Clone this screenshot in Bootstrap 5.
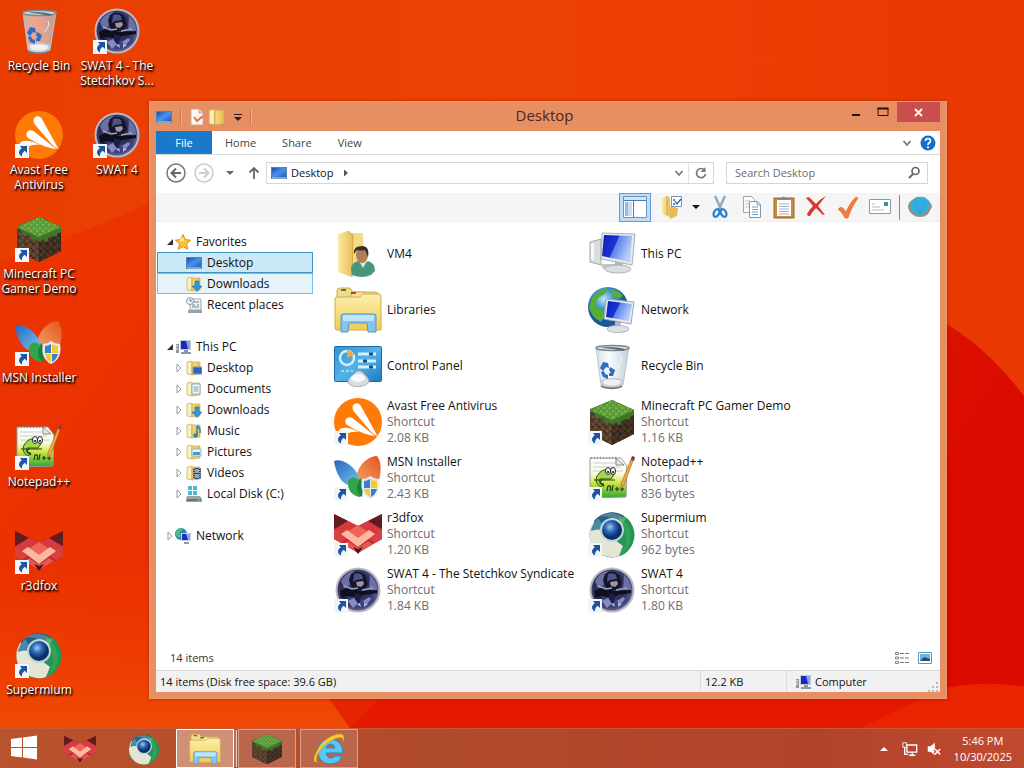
<!DOCTYPE html>
<html lang="en">
<head>
<meta charset="utf-8">
<meta name="viewport" content="width=device-width, initial-scale=1">
<title>Desktop</title>
<link href="https://cdn.jsdelivr.net/npm/bootstrap@5.3.0/dist/css/bootstrap.min.css" rel="stylesheet">
<style>
  body { font-family: "Open Sans", "Noto Sans", sans-serif; font-size: 12px; line-height: 16px; color: #111; background: #e93a02; }
  a { color: inherit; text-decoration: none; }
  svg { display: block; flex: none; }
  .i16 { width: 16px; height: 16px; }
  .i18 { width: 18px; height: 18px; }
  .i24 { width: 24px; height: 24px; }
  .i32 { width: 32px; height: 32px; }
  .i48 { width: 48px; height: 48px; }
  .flat { padding: 0; border: 0; border-radius: 0; background: none; font-size: 12px; line-height: 16px; color: inherit; display: flex; align-items: center; justify-content: center; flex: none; }
  .compact { font-size: 11px; }

  .shortcuts { display: grid; grid-auto-flow: column; grid-template-rows: repeat(7, 104px); grid-auto-columns: 78px; width: max-content; }
  .shortcut { display: flex; flex-direction: column; align-items: center; padding-top: 7px; color: #fff; text-align: center; text-shadow: 1px 1px 2px #000, 1px 2px 2px #000; line-height: 15px; }
  .shortcut svg { margin-bottom: 3px; }

  .explorer { left: 149px; right: 77px; top: 101px; bottom: 29px; background: #e88e63; border: 1px solid #ee9b74; padding: 0 6px 6px; box-shadow: 0 0 3px rgba(90,20,0,.45); }
  .titlebar { height: 29px; color: #4a2a1e; }
  .titlebar h1 { font-size: 15px; line-height: 20px; font-weight: 400; padding: 0 6px 4px 0; }
  .cut { width: 1px; height: 16px; background: #c97a55; border-right: 1px solid #f3ac8a; box-sizing: content-box; }
  .close { width: 43px; height: 20px; background: #c7504f; }
  .tabs { height: 24px; border-bottom: 1px solid #dadbdc; color: #444; background: #fff; }
  .tabs a { padding: 0 13px; line-height: 25px; }
  .tabs .file { width: 56px; padding: 0; text-align: center; background: #1979ca; color: #fff; align-self: stretch; line-height: 23px; }
  .addressrow { height: 38px; padding: 0 12px 2px 10px; background: #fff; }
  .field { height: 22px; border: 1px solid #d5d5d5; background: #fff; }
  .search { width: 202px; margin-left: 12px; }
  .search input { border: 0; outline: 0; min-width: 0; height: 20px; line-height: 20px; font-size: 11px; padding: 0 8px; color: #666; background: none; }
  .search input::placeholder { color: #6d6d6d; opacity: 1; }
  .tools { height: 29px; background: #f5f5f5; border-bottom: 1px solid #e8edf2; padding-right: 4px; }
  .tools .flat { width: 32px; height: 29px; }
  .tools .arrow { width: 16px; }
  .tools .on { background: #bfdcf8; border: 1px solid #5c9ad8; margin-right: 5px; }
  .rule { width: 1px; height: 25px; background: #888; margin: 0 4px 0 3px; }
  .tree { width: 165px; padding: 9px 0 0 1px; }
  .tree a { display: flex; align-items: center; width: 156px; height: 21px; padding-left: 7px; border: 1px solid transparent; }
  .tree a.sub { padding-left: 16px; }
  .tree span { margin-left: 5px; }
  .tree .gap { margin-top: 21px; }
  .tree .twist { width: 10px; height: 10px; }
  .tree .sub .i16 { margin-left: 2px; }
  .tree a.picked { background: #cbe8f6; border-color: #3c94c4; }
  .tree a.hot { background: #e5f3fb; border-color: #70c0e7; }
  .files { display: grid; grid-template-columns: repeat(auto-fill, 254px); grid-auto-rows: 56px; padding: 4px 0 0 13px; align-content: start; }
  .files a { display: flex; align-items: center; gap: 5px; white-space: nowrap; }
  .files small { display: block; font-size: 12px; color: #6d6d6d; }
  .summary { height: 25px; padding: 0 8px 0 14px; color: #333; background: #fff; }
  .statusbar { height: 22px; background: #f1f1f1; border-top: 1px solid #d7d7d7; }
  .statusbar > div { border-left: 1px solid #dcdcdc; height: 21px; }
  .total { width: 86px; }
  .place { width: 154px; }

  .taskbar { height: 40px; background: linear-gradient(90deg, #b9532d, #b04a2c 45%, #b2432b 80%, #bf4a30); border-top: 1px solid #c55a35; color: #fff; }
  .task { width: 58px; height: 39px; border: 1px solid #d9a08c; background: #b9664c; margin-right: 4px; }
  .task.current { border: 1px solid #fff; background: #cf9078; box-shadow: 3px 0 0 -1px #b96b52, 4px 0 0 -1px #f1d3c8; }
</style>
</head>
<body>
<svg width="0" height="0" class="position-absolute" aria-hidden="true">
  <defs>
    <linearGradient id="gFolder" x1="0" x2="1"><stop offset="0" stop-color="#fbe9a4"/><stop offset="1" stop-color="#e6bf55"/></linearGradient>
    <linearGradient id="gFolderV" x1="0" y1="0" x2="0" y2="1"><stop offset="0" stop-color="#fbeeb0"/><stop offset="1" stop-color="#f0cd52"/></linearGradient>
    <linearGradient id="gScreen" x1="0" x2="1" y2=".4"><stop offset="0" stop-color="#0a1fae"/><stop offset=".5" stop-color="#1c35d6"/><stop offset=".52" stop-color="#5d80ee"/><stop offset="1" stop-color="#b6cdfa"/></linearGradient>
    <linearGradient id="gPanel" x1="0" y1="0" x2="1" y2="1"><stop offset="0" stop-color="#2f93d6"/><stop offset=".5" stop-color="#55b2e8"/><stop offset="1" stop-color="#1d78c0"/></linearGradient>
    <linearGradient id="gBlue" x1="0" y1="0" x2="1" y2="1"><stop offset="0" stop-color="#1a4fb0"/><stop offset=".5" stop-color="#4b92ec"/><stop offset="1" stop-color="#2259b8"/></linearGradient>
    <radialGradient id="gGlobe" cx=".4" cy=".3"><stop offset="0" stop-color="#bfe5fa"/><stop offset=".5" stop-color="#3f93cf"/><stop offset="1" stop-color="#155a99"/></radialGradient>
    <radialGradient id="gOrb" cx=".4" cy=".35"><stop offset="0" stop-color="#9ecbf5"/><stop offset=".5" stop-color="#2e69b8"/><stop offset="1" stop-color="#0b2e6c"/></radialGradient>
    <linearGradient id="gBin" x1="0" x2="1"><stop offset="0" stop-color="#c6d3dc" stop-opacity=".75"/><stop offset=".4" stop-color="#f2f8fd" stop-opacity=".55"/><stop offset="1" stop-color="#a9bbc8" stop-opacity=".75"/></linearGradient>
    <linearGradient id="gWingB" x1="0" y1="0" x2="1" y2="1"><stop offset="0" stop-color="#2567c0"/><stop offset="1" stop-color="#7cc4ee"/></linearGradient>
    <linearGradient id="gWingO" x1="1" y1="0" x2="0" y2="1"><stop offset="0" stop-color="#e2541c"/><stop offset="1" stop-color="#f5a56a"/></linearGradient>
    <linearGradient id="gNote" x1="0" y1="0" x2="0" y2="1"><stop offset="0" stop-color="#fff"/><stop offset=".4" stop-color="#f7fae0"/><stop offset=".6" stop-color="#d7e74a"/><stop offset="1" stop-color="#2ba62e"/></linearGradient>
    <radialGradient id="gSwat" cx=".45" cy=".45" r=".6"><stop offset="0" stop-color="#43467c"/><stop offset=".6" stop-color="#2c2c58"/><stop offset="1" stop-color="#6d739c"/></radialGradient>
    <pattern id="pGrass" width="6" height="6" patternUnits="userSpaceOnUse"><rect width="6" height="6" fill="#5fa03c"/><path d="M0 0h2v2h-2zM3 3h2v2h-2z" fill="#74b54a"/><path d="M4 0h2v1h-2zM1 4h1v2h-1z" fill="#4e8a31"/></pattern>
    <pattern id="pDirt" width="7" height="7" patternUnits="userSpaceOnUse"><rect width="7" height="7" fill="#563f2c"/><path d="M0 1h2v2h-2zM4 4h2v2h-2z" fill="#6f5138"/><path d="M3 0h2v2h-2zM1 5h2v1h-2z" fill="#3b2a1c"/></pattern>

    <symbol id="arrow" viewBox="0 0 14 14"><path d="M0 0h14v14H0z" fill="#f3f5f8"/><path d="M5 2h7v7L9.700 6.700C7.500 8.200 6.800 9.700 7 12.500 3.500 10.500 2.700 7 6.800 4.200z" fill="#1d559e"/></symbol>

    <symbol id="bin" viewBox="0 0 48 48">
      <path d="M8 5l5 38c5 3 16 3 22 0l6-38z" fill="url(#gBin)" stroke="#b9c6cf"/>
      <path d="M13 38l1 6c5 3 15 3 20 0l1-6c-6-3-16-3-22 0z" fill="#c7cdd2"/><path d="M15 39c5-2 13-2 18 0l-1 3c-5 2-11 2-16 0z" fill="#eff2f3"/>
      <path d="M13 44c5 3 17 3 21 0" stroke="#777d82" stroke-width="2" fill="none"/>
      <ellipse cx="24.500" cy="6" rx="16.500" ry="2.500" fill="#dce6ec" stroke="#7d8990" stroke-width="1.500"/><path d="M12 6c8-2 17-1 25 1l-2 2c-8-2-16-3-23-3z" fill="#596f79"/>
      <path d="M15 20l5 1 1 5-3-1-3 4-3-3zM22 25l5 3-2 6h-4v-3h2l-2-3zM13 30l3-1 1 3 3 1v4l-5-2z" fill="#2e6dc2"/><path d="M33 14l1 4-4 7" stroke="#fff" fill="none" opacity=".7"/>
    </symbol>
    <symbol id="swat" viewBox="0 0 48 48">
      <circle cx="24" cy="24" r="21.500" fill="url(#gSwat)" stroke="#bcb8c4" stroke-width="2"/>
      <path d="M7 15c4-7 9-10 14-10-4 4-6 9-5 14l-6 3zM36 9c5 4 8 11 7 18l-8-4z" fill="#6a71a3"/>
      <path d="M17 8q7-5 14 1l3 9-3 5-8 2-6-5-2-6z" fill="#14142a"/><path d="M20 8q5-2 8 1l1 4-7 1-3 2z" fill="#4d5389"/><path d="M22 16l7-1 1 3-3 3-4-1z" fill="#a4929f"/>
      <path d="M6 25l9-4 10 4 18-1v3l-13 2-5 3-11-2-7 2z" fill="#100f20"/><path d="M10 20l8 3 6-1M28 24l11-2" stroke="#a5a5c2" stroke-width="1.500" fill="none"/>
      <path d="M11 33l10-2 9 3 8-4 3 3c-5 8-14 11-23 8z" fill="#3e4284"/><path d="M14 35l6-3 4 5-5 5zM29 35l6-4 2 2-5 6z" fill="#868bc0"/><path d="M21 27l7 2-3 10-4-6zM8 31l6 1-2 5z" fill="#1c1f47"/><path d="M30 37l4 1-4 3zM23 38l3-1 1 4z" fill="#b6b9d6"/>
    </symbol>
    <symbol id="avast" viewBox="0 0 48 48"><circle cx="24" cy="24" r="24" fill="#ff7b05"/><path d="M18.500 9c1-5 7-5 9 0l16 29c-3-1-5-3-7-5L19.500 13q-1-2-1-4z" fill="#fff"/><path d="M12 21c3-3 6-2 9 1l20 16C32 37 21 32 13 27c-2-2-2-4-1-6zM5 32c4-4 12-2 20 2-7-1-12 1-16 4-3-1-4-3-4-6z" fill="#fff"/></symbol>
    <symbol id="mc" viewBox="0 0 48 48">
      <path d="M2 12l22-10 22 10v24L24 47 2 36z" fill="#4b3828"/><path d="M2 12l22 10v25L2 36z" fill="url(#pDirt)"/><path d="M46 12L24 22v25l22-11z" fill="url(#pDirt)"/><path d="M46 12L24 22v25l22-11z" fill="#000" opacity=".25"/>
      <path d="M24 2l22 10v5l-4 2v2l-4 1v-1l-5 2v3l-4 1v-3l-5 3-4-3v2l-4-2v-3l-5-2v3l-4-3v-3l-5-2v-3z" fill="#3f7429"/><path d="M24 2l22 10-22 10L2 12z" fill="url(#pGrass)"/>
    </symbol>
    <symbol id="msn" viewBox="0 0 48 48">
      <path d="M22 27C22 12 34 2 43 2c5 6 4 17 2 24l-19 4z" fill="url(#gWingO)"/><path d="M0 7c9-4 26 9 26 22-5 3-12 4-17-1C4 23 1 14 0 7z" fill="url(#gWingB)"/>
      <path d="M14 27c4-6 12-5 15 8l-3 8c-7-1-13-6-12-16z" fill="#31a548"/><path d="M26 24c3 3 3 12 2 19-3-1-5-6-5-11z" fill="#168442"/>
      <path d="M28 25c3 0 6-1 8-3 3 2 6 3 9 3 2 10-2 17-9 20-7-4-10-10-8-20z" fill="#e6eaf0"/><path d="M30 27c2 0 4-1 6-2v9h-6z" fill="#3a7dd0"/><path d="M37 25q3 2 6 2v7h-6z" fill="#f4cb28"/><path d="M30 35h6v8q-5-3-6-8z" fill="#f4cb28"/><path d="M37 35h6q-1 5-6 8z" fill="#3a7dd0"/>
    </symbol>
    <symbol id="npp" viewBox="0 0 48 48">
      <path d="M2 4h31l6 8-1 31-36 1z" fill="url(#gNote)" stroke="#999"/><path d="M5 9h25M5 13h27M5 17h30" stroke="#c8ccd6"/><path d="M3 4h27" stroke="#555" stroke-dasharray="1 2"/><path d="M28 4v7h8z" fill="#e9e9e9" stroke="#888"/>
      <path d="M9 22q5-8 12-6 5-3 6 3l-4 6H12q-3 4 4 5l-3 3q-7-4-4-11z" fill="#a4d84a" stroke="#31561c"/><ellipse cx="20" cy="17" rx="2.500" ry="3.500" fill="#fff" stroke="#222"/><ellipse cx="25" cy="17" rx="2.500" ry="3.500" fill="#fff" stroke="#222"/><circle cx="20" cy="18" r="1"/><circle cx="25" cy="18" r="1"/>
      <path d="M6 26h21M14 25l-2 4 4 3M19 37l1-5q4-1 2 5M25 31l-1 6M27 35h4M29 33v4M32 35h4M34 33v4" stroke="#173f10" stroke-width="1.200" fill="none"/>
      <path d="M44 3l2 1-10 27-3 4v-5z" fill="#eeaa45" stroke="#a56d24" stroke-width=".7"/><path d="M44 2l3 1-1 4-3-1z" fill="#7f3a4e"/>
    </symbol>
    <symbol id="fox" viewBox="0 0 48 48">
      <path d="M0 4l24 12L48 4v25L24 43 0 29z" fill="#bd262c"/><path d="M0 4l14 7-14 8zM48 4l-14 7 14 8z" fill="#611b21"/><path d="M14 11l10 5 10-5 14 9-24 15L0 20z" fill="#d53a3c"/><path d="M0 29V19l14 9-7 5zM48 29V19l-14 9 7 5z" fill="#d94042"/><path d="M24 15l12 8-12 8-12-8z" fill="#ef655b"/><path d="M7 24l6-4 11 8 11-8 6 4-17 13z" fill="#fbb9a2"/><path d="M14 31l10 7 10-7 5 3-15 9-15-9z" fill="#e65952"/><path d="M19 37l5 2 5-2-5 7z" fill="#4c1217"/>
    </symbol>
    <symbol id="sup" viewBox="0 0 48 48">
      <circle cx="24" cy="25" r="22.500" fill="#24945a"/><path d="M6 11A22.500 22.500 0 0 1 36 6l-10 8q-9 4-11 12z" fill="#246283"/><path d="M6 11A22.500 22.500 0 0 0 31 46l4-10L6 14z" fill="#e4e5d5"/><path d="M3 21Q4 14 10 8l8 13Q10 18 3 21z" fill="#4889a7"/><path d="M31 46q9-9 6-25l-7-15a22.500 22.500 0 0 1 1 40z" fill="#31a451"/><circle cx="24" cy="20" r="12" fill="#bed5d7"/><circle cx="24" cy="20" r="10" fill="url(#gOrb)"/><path d="M9 7q16-9 29 2l-5 6Q22 4 9 7z" fill="#fff" opacity=".2"/>
    </symbol>
    <symbol id="user" viewBox="0 0 48 48">
      <path d="M13 3h16l1 34-12 4z" fill="#f3dc85"/><path d="M4 4l10-3 5 4-1 42-14-5z" fill="url(#gFolder)"/><path d="M14 1l5 4-1 42" stroke="#d3a840" fill="none"/>
      <path d="M17 39q1-8 9-8l4 3 4-3q7 2 7 10l-4 4q-9 4-19 0z" fill="#4a967b"/><path d="M25 31h8l-4 7z" fill="#dfeae8"/><ellipse cx="28" cy="25" rx="6" ry="8" fill="#b37e57"/><path d="M20 24q-1-8 8-8 8 0 6 11l-3-7q-5 1-8 0z" fill="#3b3029"/>
    </symbol>
    <symbol id="lib" viewBox="0 0 48 48">
      <path d="M3 5q0-3 3-3h10l3 4h22q4 0 4 4v10H3z" fill="#eedb8e" stroke="#cfae51"/><path d="M17 6h13l3 4h12v10H17z" fill="#f4e39d" stroke="#cfae51"/><path d="M7 4h5M17 7h5M30 10h5" stroke="#437d49" stroke-width="2"/><path d="M18 7h4" stroke="#ba472e" stroke-width="2"/>
      <path d="M1 13q0-2 2-2h23l3-3h16q2 0 2 3v33H3q-2 0-2-2z" fill="url(#gFolderV)" stroke="#d1ac46"/><path d="M7 30q0-2 2-2h31q2 0 2 2v16h-8l-1-9H15l-1 9H7z" fill="#83c4ec" stroke="#5199c9"/><path d="M9 29h31v6H9z" fill="#c1e4f7"/>
    </symbol>
    <symbol id="cpl" viewBox="0 0 48 48"><rect x=".5" y="4.500" width="47" height="35" rx="1" fill="url(#gPanel)" stroke="#1d6ba8"/><circle cx="13" cy="16" r="7" fill="none" stroke="#d2effd" stroke-width="2.500"/><path d="M13 16V8a8 8 0 0 1 7 5z" fill="#f3a63c"/><path d="M24 12h18M24 19h18M24 25h18" stroke="#d6f0ff" stroke-width="3"/><path d="M35 12h4M29 19h4M35 25h4" stroke="#115087" stroke-width="3"/><path d="M7 29h12" stroke="#98e0e7" stroke-width="2" stroke-dasharray="3 2"/><path d="M14 41c0-5 3-6 6-9 3-4 7-4 10 0 3 3 5 5 5 8-5 6-16 6-21 1z" fill="#d7dde1" stroke="#a7afb5"/><ellipse cx="24" cy="36" rx="7" ry="4" fill="#f7f9fa"/></symbol>
    <symbol id="pc" viewBox="0 0 48 48"><path d="M2 12l11-3v26l-11-3z" fill="#d9dde0" stroke="#a5a9ae"/><path d="M3 14l3-1v17l-3-1z" fill="#f9f9f9"/><path d="M12 34h15l3 3-15 2z" fill="#c2c7cb"/><path d="M14 3l33 1-3 31-31-6z" fill="#e5e9ed" stroke="#a8afb5"/><path d="M16 5l28 1-2 26-28-6z" fill="url(#gScreen)"/><path d="M27 31l8 2v4h-8z" fill="#b1b6bb"/><ellipse cx="30" cy="39" rx="13" ry="4" fill="#dbdfe2" stroke="#b0b5ba"/></symbol>
    <symbol id="net" viewBox="0 0 48 48"><circle cx="20" cy="21" r="20" fill="url(#gGlobe)"/><path d="M4 12q7-9 15-10l-1 5-8 5-3 8 7 3 3 7-4 6q-10-5-12-15zM23 3q8 1 12 7l-5 3-6-4z" fill="#58ad3a"/><path d="M18 13L46 16l-3 22-27-5z" fill="#e6eaee" stroke="#9fa7b0"/><path d="M20 15l24 3-3 17-23-4z" fill="url(#gScreen)"/><path d="M27 36h6v6h-6z" fill="#b2b8bd"/><ellipse cx="30" cy="43" rx="11" ry="3.500" fill="#dbe0e3" stroke="#b0b6bb"/></symbol>

    <symbol id="fd" viewBox="0 0 16 16"><path d="M1 2l4-1 2 1h7v12l-8 1-5-1z" fill="url(#gFolder)" stroke="#d4af55" stroke-width=".7"/><path d="M6 2v13" stroke="#cfa846"/><path d="M2 3l3-1v12l-3-1z" fill="#fcf0bd"/></symbol>
    <symbol id="screen" viewBox="0 0 16 16"><path d="M0 2h16v12H0z" fill="#5b7eb0"/><path d="M1 3h14v9H1z" fill="url(#gBlue)"/><path d="M1 13h14" stroke="#b9c8d2"/></symbol>
    <symbol id="star" viewBox="0 0 16 16"><path d="M8 .5l2.200 5 5.300.7-4 3.600 1.200 5.400L8 12.600l-4.700 2.600 1.200-5.400-4-3.600 5.300-.7z" fill="#fbc634" stroke="#dc8d19"/><path d="M8 3l1 4H4z" fill="#fff0a4"/></symbol>
    <symbol id="down" viewBox="0 0 16 16"><path d="M9 5h4v5h3l-5 5.500L6 10h3z" fill="#3196d6" stroke="#1d6ba3" stroke-width=".6"/></symbol>
    <symbol id="recent" viewBox="0 0 16 16"><path d="M4 2h11v11H4z" fill="#eef2f5" stroke="#9aaab5"/><path d="M6 5h7M6 8h3M11 8h2M6 10h7" stroke="#73838e"/><path d="M2 13h14v3H2z" fill="#93a4ad"/><circle cx="4" cy="4" r="3.500" fill="#f1f5f8" stroke="#8998a2"/><path d="M4 2v2h2" stroke="#587284" fill="none"/></symbol>
    <symbol id="disk" viewBox="0 0 16 16"><path d="M2 0h4v4H2zM7 0h4v4H7zM2 5h4v4H2zM7 5h4v4H7z" fill="#45b9dd"/><path d="M1 10h13l2 3v3H0v-3z" fill="#9aa4a8"/><path d="M1 13h14v2H1z" fill="#68747a"/><path d="M11 14h3" stroke="#7bdb5c"/></symbol>
    <symbol id="pcs" viewBox="0 0 16 16"><path d="M1 5h3v9H1z" fill="#8b98a2"/><path d="M1 7h2M1 10h2" stroke="#fff"/><path d="M5 1h11v10H5z" fill="#c1ccd6"/><path d="M6 2h9v8H6z" fill="#1b27bd"/><path d="M11 2h4v8h-2z" fill="#879eea"/><path d="M9 11h4v2h3v2H6v-2h3z" fill="#8b98a2"/></symbol>
    <symbol id="nets" viewBox="0 0 16 16"><circle cx="6" cy="6" r="6" fill="#2683bd"/><path d="M1 3q4-4 7-2L5 5l1 3-2 2Q0 8 1 3z" fill="#56b878"/><path d="M6 5h10v8H6z" fill="#c8d3de"/><path d="M7 6h8v6H7z" fill="#1c2dc1"/><path d="M11 6h4v6h-2z" fill="#90a9ee"/><path d="M9 14h5v2H9z" fill="#8d9da8"/></symbol>
    <symbol id="open" viewBox="0 0 10 10"><path d="M8 2v6H2z" fill="#333"/></symbol>
    <symbol id="shut" viewBox="0 0 10 10"><path d="M3 1l4 4-4 4z" fill="#fff" stroke="#999"/></symbol>
    <symbol id="chev" viewBox="0 0 10 10"><path d="M1.500 3l3.500 4 3.500-4" stroke="#777" stroke-width="1.800" fill="none"/></symbol>
    <symbol id="tri" viewBox="0 0 10 10"><path d="M1 3h8L5 7z" fill="currentColor"/></symbol>
    <symbol id="ie" viewBox="0 0 32 32"><path d="M30 20H13q1 5 5 5 3 0 4-2h7q-3 8-12 8Q5 30 5 18 6 6 17 6q13 1 13 14zM13 15h9q-1-4-4-4-4 0-5 4z" fill="#5bc6f1" stroke="#2787c6"/><path d="M5 29q-7 1-2-9Q8 8 19 3q12-5 12 2l-1 4q1-6-6-4Q12 9 6 19q-5 9-1 10z" fill="#f9cb2b" stroke="#d99b16" stroke-width=".6"/></symbol>
  </defs>
</svg>

<div class="d-flex flex-column vh-100 overflow-hidden">
  <main class="position-relative flex-grow-1 overflow-hidden">
    <svg class="position-absolute top-0 start-0 w-100 h-100" viewBox="0 0 1024 728" preserveAspectRatio="none" aria-hidden="true">
      <defs>
        <linearGradient id="wTop" x1="0" x2="1"><stop offset="0" stop-color="#e93e02"/><stop offset=".5" stop-color="#ee4104"/><stop offset="1" stop-color="#e93802"/></linearGradient>
        <linearGradient id="wLow" x1="0" x2="1" y2=".4"><stop offset="0" stop-color="#ec3402"/><stop offset=".45" stop-color="#ea3000"/><stop offset="1" stop-color="#da0c00"/></linearGradient>
        <linearGradient id="wBase" x1="0" x2="0" y1="0" y2="1"><stop offset="0" stop-color="#f03c00" stop-opacity="0"/><stop offset="1" stop-color="#ef4b05"/></linearGradient>
      </defs>
      <path d="M0 0h1024v728H0z" fill="url(#wTop)"/>
      <path d="M0 262Q80 235 150 203L500 120l440 200q46 26 84 76v332H0z" fill="url(#wLow)"/>
      <path d="M0 560h150l180 140 20 28H0z" fill="url(#wBase)"/>
      <path d="M350 728l30-30h644v30z" fill="#e51800"/>
      <path d="M940 690q30-10 84-4v42H860z" fill="#e92400"/>
      <path d="M158 61.500h702" stroke="#93604a"/>
    </svg>

    <nav class="shortcuts position-relative" aria-label="Desktop icons">
      <a href="#" class="shortcut"><svg class="i48"><use href="#bin"/></svg>Recycle Bin</a>
      <a href="#" class="shortcut"><svg class="i48" viewBox="0 0 48 48"><use href="#avast"/><use href="#arrow" x="0" y="33" width="14" height="14"/></svg>Avast Free<br>Antivirus</a>
      <a href="#" class="shortcut"><svg class="i48" viewBox="0 0 48 48"><use href="#mc"/><use href="#arrow" x="0" y="33" width="14" height="14"/></svg>Minecraft PC<br>Gamer Demo</a>
      <a href="#" class="shortcut"><svg class="i48" viewBox="0 0 48 48"><use href="#msn"/><use href="#arrow" x="0" y="33" width="14" height="14"/></svg>MSN Installer</a>
      <a href="#" class="shortcut"><svg class="i48" viewBox="0 0 48 48"><use href="#npp"/><use href="#arrow" x="0" y="33" width="14" height="14"/></svg>Notepad++</a>
      <a href="#" class="shortcut"><svg class="i48" viewBox="0 0 48 48"><use href="#fox"/><use href="#arrow" x="0" y="33" width="14" height="14"/></svg>r3dfox</a>
      <a href="#" class="shortcut"><svg class="i48" viewBox="0 0 48 48"><use href="#sup"/><use href="#arrow" x="0" y="33" width="14" height="14"/></svg>Supermium</a>
      <a href="#" class="shortcut text-nowrap"><svg class="i48" viewBox="0 0 48 48"><use href="#swat"/><use href="#arrow" x="0" y="33" width="14" height="14"/></svg>SWAT 4 - The<br>Stetchkov S...</a>
      <a href="#" class="shortcut"><svg class="i48" viewBox="0 0 48 48"><use href="#swat"/><use href="#arrow" x="0" y="33" width="14" height="14"/></svg>SWAT 4</a>
    </nav>

    <section class="explorer position-absolute d-flex flex-column" aria-label="Desktop folder">
      <header class="titlebar d-flex align-items-center flex-shrink-0">
        <svg class="i16"><use href="#screen"/></svg>
        <span class="cut ms-2"></span>
        <button class="flat ms-2" aria-label="Properties"><svg width="14" height="16" viewBox="0 0 14 16"><path d="M1 0h8l4 4v12H1z" fill="#fdf8f4" stroke="#c3a99a"/><path d="M9 0v4h4" fill="#e9d6ca" stroke="#c3a99a"/><path d="M4 8l3 4 6-5" stroke="#e0764b" stroke-width="2" fill="none"/></svg></button>
        <button class="flat ms-1" aria-label="New folder"><svg class="i18"><use href="#fd"/></svg></button>
        <button class="flat ms-2" aria-label="Customize toolbar"><svg width="8" height="12" viewBox="0 0 8 12"><path d="M0 3.500h8" stroke="#222"/><path d="M0 6h8l-4 4z" fill="#222"/></svg></button>
        <span class="cut ms-2"></span>
        <h1 class="m-0 flex-grow-1 text-center">Desktop</h1>
        <div class="d-flex align-self-start">
          <button class="flat px-2" aria-label="Minimize"><svg width="10" height="20" viewBox="0 0 10 20"><path d="M1 13h8" stroke="#2b1208" stroke-width="2"/></svg></button>
          <button class="flat px-2" aria-label="Maximize"><svg width="12" height="20" viewBox="0 0 12 20"><path d="M1 6.500h10v7H1z" fill="none" stroke="#2b1208"/><path d="M.5 6.500h11" stroke="#2b1208" stroke-width="2"/></svg></button>
          <button class="flat close" aria-label="Close"><svg width="9" height="9" viewBox="0 0 9 9"><path d="M1 1l7 7M8 1L1 8" stroke="#fff" stroke-width="1.800"/></svg></button>
        </div>
      </header>

      <nav class="tabs compact d-flex align-items-center flex-shrink-0" aria-label="Ribbon">
        <a href="#" class="file">File</a><a href="#">Home</a><a href="#">Share</a><a href="#">View</a>
        <button class="flat ms-auto" aria-label="Expand the ribbon"><svg width="10" height="10"><use href="#chev"/></svg></button>
        <button class="flat ms-2 me-1" aria-label="Help"><svg class="i16" viewBox="0 0 16 16"><circle cx="8" cy="8" r="7.500" fill="#1272c8"/><path d="M5.500 6q0-2.500 2.500-2.500T10.500 6Q10.500 7 9 8 8 8.500 8 10" stroke="#fff" stroke-width="1.700" fill="none"/><circle cx="8" cy="12.300" r="1.100" fill="#fff"/></svg></button>
      </nav>

      <div class="addressrow d-flex align-items-center flex-shrink-0">
        <button class="flat" aria-label="Back"><svg width="20" height="20" viewBox="0 0 20 20"><circle cx="10" cy="10" r="9" fill="none" stroke="#777" stroke-width="1.500"/><path d="M15 10H6M10 5.500L5.500 10l4.500 4.500" stroke="#666" stroke-width="2" fill="none"/></svg></button>
        <button class="flat ms-2" aria-label="Forward"><svg width="20" height="20" viewBox="0 0 20 20"><circle cx="10" cy="10" r="9" fill="none" stroke="#ccc" stroke-width="1.500"/><path d="M5 10h9M10 5.500l4.500 4.500-4.500 4.500" stroke="#ccc" stroke-width="2" fill="none"/></svg></button>
        <button class="flat ms-2 me-1 px-1 text-secondary" aria-label="Recent locations"><svg width="8" height="10" viewBox="1 0 8 10"><path d="M1 3h8L5 7z" fill="#666"/></svg></button>
        <button class="flat ms-1" aria-label="Up"><svg width="16" height="16" viewBox="0 0 16 16"><path d="M8 14V3M3.500 7.500L8 3l4.500 4.500" stroke="#666" stroke-width="1.800" fill="none"/></svg></button>
        <div class="field d-flex align-items-center flex-grow-1 ms-1 ps-1">
          <svg class="i16 ms-0 me-1"><use href="#screen"/></svg><a href="#" class="compact">Desktop</a>
          <button class="flat ms-2" aria-label="Subfolders"><svg width="10" height="10" viewBox="0 0 10 10"><path d="M3 1.500L7 5 3 8.500z" fill="#555"/></svg></button>
          <button class="flat ms-auto me-1" aria-label="Previous locations"><svg width="10" height="10"><use href="#chev"/></svg></button>
          <button class="flat border-start h-100 px-1" aria-label="Refresh"><svg class="i16" viewBox="0 0 16 16"><path d="M11.500 5A4.600 4.600 0 1 0 12.600 9" stroke="#777" stroke-width="1.700" fill="none"/><path d="M12.500 2v5h-5z" fill="#777"/></svg></button>
        </div>
        <div class="field search d-flex align-items-center">
          <label class="visually-hidden" for="q">Search Desktop</label>
          <input id="q" type="text" class="flex-grow-1" placeholder="Search Desktop">
          <svg class="me-1 i18" viewBox="0 0 18 18" aria-hidden="true"><circle cx="10.500" cy="7" r="3.500" fill="none" stroke="#666" stroke-width="1.700"/><path d="M8 10l-4 4" stroke="#666" stroke-width="2"/></svg>
        </div>
      </div>

      <div class="tools d-flex justify-content-end align-items-center flex-shrink-0" role="toolbar" aria-label="Commands">
        <button class="flat on" aria-label="Navigation pane"><svg class="i24" viewBox="0 0 24 24"><path d="M.5 1.500h23v21H.5z" fill="#fff" stroke="#6a93be"/><path d="M1 2h22v3H1z" fill="#d3e6f5"/><path d="M2 7h7v14H2z" fill="#8fbfe9"/><path d="M5 7h4v14H5z" fill="#c5e0f6"/><path d="M1 5.500h22M10.500 6v16" stroke="#4a7cae"/></svg></button>
        <button class="flat" aria-label="Layout"><svg class="i24" viewBox="0 0 24 24"><path d="M2 3l5-2 3 2v19l-6-2-2-3z" fill="url(#gFolder)"/><path d="M10 11l8 2-1 8-7 3z" fill="#e6be57"/><path d="M7 1v19" stroke="#cda642"/><path d="M11.500 1.500h10v10h-10z" fill="#fff" stroke="#7895b0"/><path d="M13 5h2M13 9h2M15 6l2 3 4-5" stroke="#245fa4" stroke-width="1.300" fill="none"/></svg></button>
        <button class="flat arrow" aria-label="Layout options"><svg width="10" height="10"><use href="#tri"/></svg></button>
        <button class="flat" aria-label="Cut"><svg class="i24" viewBox="0 0 24 24"><path d="M7 1l6 13M17 1l-6 13" stroke="#8fabc0" stroke-width="2.500"/><ellipse cx="8.500" cy="18" rx="2.600" ry="4" transform="rotate(25 8.500 18)" fill="none" stroke="#2f86cf" stroke-width="2.400"/><ellipse cx="15.500" cy="18" rx="2.600" ry="4" transform="rotate(-25 15.500 18)" fill="none" stroke="#2f86cf" stroke-width="2.400"/></svg></button>
        <button class="flat" aria-label="Copy"><svg class="i24" viewBox="0 0 24 24"><path d="M3.500 1.500h8l3 3v13h-11z" fill="#fafafa" stroke="#9da7b2"/><path d="M5 6h5M5 9h4M5 12h4" stroke="#b9c5cf"/><path d="M9.500 6.500h8l3 3v13h-11z" fill="#fff" stroke="#8796a6"/><path d="M12 12h6M12 14.500h6M12 17h6M12 19.500h6" stroke="#6aa4d5"/><path d="M17 7v3h3" fill="none" stroke="#8796a6"/></svg></button>
        <button class="flat" aria-label="Paste"><svg class="i24" viewBox="0 0 24 24"><path d="M2 3h20v20H2z" fill="#c98b45" stroke="#9c6429"/><path d="M5 5h14v16H5z" fill="#fff"/><path d="M7 9h10M7 11.500h10M7 14h10M7 16.500h10M7 19h10" stroke="#a7b2bb"/><path d="M7 5q1-2 3-2 1-3 4 0 2 0 3 2z" fill="#78889a"/></svg></button>
        <button class="flat" aria-label="Delete"><svg class="i24" viewBox="0 0 24 24"><path d="M2 3q3-2 5 1l5 5q4-5 10-8-5 6-8 10l7 9q-3 0-4-2l-5-5q-4 4-6 8-3 0-3-2 3-5 6-8Q5 6 2 3z" fill="#d8372a"/></svg></button>
        <button class="flat" aria-label="Rename"><svg class="i24" viewBox="0 0 24 24"><path d="M2 14q3-3 5-1l3 4Q14 7 20 2l2 1q-7 10-10 20H9Q6 17 2 14z" fill="#ee7d3c" stroke="#d76424" stroke-width=".5"/></svg></button>
        <button class="flat" aria-label="Properties"><svg class="i24" viewBox="0 0 24 24"><path d="M1.500 4.500h21v14h-21z" fill="#fff" stroke="#8f9ba4"/><path d="M16 7h4v4h-4z" fill="#2f95a3"/><path d="M4 12h8M4 15h12M4 9h3" stroke="#a6bed0"/></svg></button>
        <span class="rule"></span>
        <button class="flat" aria-label="Classic shell settings"><svg class="i24" viewBox="0 0 24 24"><path d="M0 12q0-4 4-7 4-3 8-3t8 3q4 4 4 7l-4 7q-3 3-8 3t-8-3Q1 17 0 12z" fill="#a68c6d"/><path d="M2 10q0-3 3-5 3-4 7-3 4-1 7 2 4 3 3 8l-3 4-3 4q-4-1-8 0-5-3-6-10z" fill="#35afe1"/><path d="M12 19L5 8M12 19L9 5M12 19l4-14M12 19l7-10" stroke="#2b99cd" stroke-width=".7" fill="none"/></svg></button>
      </div>

      <div class="d-flex flex-grow-1 bg-white overflow-hidden">
        <nav class="tree flex-shrink-0" aria-label="Folders">
          <a href="#"><svg class="twist"><use href="#open"/></svg><svg class="i16"><use href="#star"/></svg><span>Favorites</span></a>
          <a href="#" class="sub picked"><i class="twist"></i><svg class="i16"><use href="#screen"/></svg><span>Desktop</span></a>
          <a href="#" class="sub hot"><i class="twist"></i><svg class="i16"><use href="#fd"/><use href="#down"/></svg><span>Downloads</span></a>
          <a href="#" class="sub"><i class="twist"></i><svg class="i16"><use href="#recent"/></svg><span>Recent places</span></a>
          <a href="#" class="gap"><svg class="twist"><use href="#open"/></svg><svg class="i16"><use href="#pcs"/></svg><span>This PC</span></a>
          <a href="#" class="sub"><svg class="twist"><use href="#shut"/></svg><svg class="i16" viewBox="0 0 16 16"><use href="#fd"/><path d="M7 7h9v7H7z" fill="#2b66bb" stroke="#7f9dc4"/></svg><span>Desktop</span></a>
          <a href="#" class="sub"><svg class="twist"><use href="#shut"/></svg><svg class="i16" viewBox="0 0 16 16"><use href="#fd"/><path d="M6 3h8v10H6z" fill="#f6f9fc" stroke="#9aadc0"/><path d="M7.500 6h5M7.500 8h5M7.500 10h5" stroke="#7c9ab8"/></svg><span>Documents</span></a>
          <a href="#" class="sub"><svg class="twist"><use href="#shut"/></svg><svg class="i16"><use href="#fd"/><use href="#down"/></svg><span>Downloads</span></a>
          <a href="#" class="sub"><svg class="twist"><use href="#shut"/></svg><svg class="i16" viewBox="0 0 16 16"><use href="#fd"/><path d="M11 3v9M11 3q4 2 3 7" stroke="#2787b0" stroke-width="1.500" fill="none"/><circle cx="9.500" cy="12.500" r="2.200" fill="#2787b0"/></svg><span>Music</span></a>
          <a href="#" class="sub"><svg class="twist"><use href="#shut"/></svg><svg class="i16" viewBox="0 0 16 16"><use href="#fd"/><path d="M6 5h9v7H6z" fill="#e6f3fa" stroke="#9bb5c5"/><path d="M7 8h7v3H7z" fill="#479bc7"/></svg><span>Pictures</span></a>
          <a href="#" class="sub"><svg class="twist"><use href="#shut"/></svg><svg class="i16" viewBox="0 0 16 16"><use href="#fd"/><path d="M7 3h8v11H7z" fill="#354350"/><path d="M9 4h4v4H9zM9 9h4v4H9z" fill="#84aacb"/><path d="M8 3v11M14 3v11" stroke="#fff" stroke-dasharray="1 1"/></svg><span>Videos</span></a>
          <a href="#" class="sub"><svg class="twist"><use href="#shut"/></svg><svg class="i16"><use href="#disk"/></svg><span>Local Disk (C:)</span></a>
          <a href="#" class="gap"><svg class="twist"><use href="#shut"/></svg><svg class="i16"><use href="#nets"/></svg><span>Network</span></a>
        </nav>
        <div class="files flex-grow-1">
          <a href="#"><svg class="i48"><use href="#user"/></svg><span>VM4</span></a>
          <a href="#"><svg class="i48"><use href="#pc"/></svg><span>This PC</span></a>
          <a href="#"><svg class="i48"><use href="#lib"/></svg><span>Libraries</span></a>
          <a href="#"><svg class="i48"><use href="#net"/></svg><span>Network</span></a>
          <a href="#"><svg class="i48"><use href="#cpl"/></svg><span>Control Panel</span></a>
          <a href="#"><svg class="i48"><use href="#bin"/></svg><span>Recycle Bin</span></a>
          <a href="#"><svg class="i48" viewBox="0 0 48 48"><use href="#avast"/><use href="#arrow" x="0" y="33" width="14" height="14"/></svg><span>Avast Free Antivirus<small>Shortcut</small><small>2.08 KB</small></span></a>
          <a href="#"><svg class="i48" viewBox="0 0 48 48"><use href="#mc"/><use href="#arrow" x="0" y="33" width="14" height="14"/></svg><span>Minecraft PC Gamer Demo<small>Shortcut</small><small>1.16 KB</small></span></a>
          <a href="#"><svg class="i48" viewBox="0 0 48 48"><use href="#msn"/><use href="#arrow" x="0" y="33" width="14" height="14"/></svg><span>MSN Installer<small>Shortcut</small><small>2.43 KB</small></span></a>
          <a href="#"><svg class="i48" viewBox="0 0 48 48"><use href="#npp"/><use href="#arrow" x="0" y="33" width="14" height="14"/></svg><span>Notepad++<small>Shortcut</small><small>836 bytes</small></span></a>
          <a href="#"><svg class="i48" viewBox="0 0 48 48"><use href="#fox"/><use href="#arrow" x="0" y="33" width="14" height="14"/></svg><span>r3dfox<small>Shortcut</small><small>1.20 KB</small></span></a>
          <a href="#"><svg class="i48" viewBox="0 0 48 48"><use href="#sup"/><use href="#arrow" x="0" y="33" width="14" height="14"/></svg><span>Supermium<small>Shortcut</small><small>962 bytes</small></span></a>
          <a href="#"><svg class="i48" viewBox="0 0 48 48"><use href="#swat"/><use href="#arrow" x="0" y="33" width="14" height="14"/></svg><span>SWAT 4 - The Stetchkov Syndicate<small>Shortcut</small><small>1.84 KB</small></span></a>
          <a href="#"><svg class="i48" viewBox="0 0 48 48"><use href="#swat"/><use href="#arrow" x="0" y="33" width="14" height="14"/></svg><span>SWAT 4<small>Shortcut</small><small>1.80 KB</small></span></a>
        </div>
      </div>

      <div class="summary d-flex align-items-center flex-shrink-0">
        <span class="compact">14 items</span>
        <button class="flat ms-auto" aria-label="Details view"><svg class="i16" viewBox="0 0 16 16"><path d="M1.500 2.500h3v2h-3zM1.500 7h3v2h-3zM1.500 11.500h3v2h-3z" fill="#fff" stroke="#858585"/><path d="M6 3.500h4M11 3.500h4M6 8h4M11 8h4M6 12.500h4M11 12.500h4" stroke="#777"/></svg></button>
        <button class="flat ms-2" aria-label="Large icons view"><svg width="14" height="16" viewBox="0 0 14 16"><path d="M.5 2.500h13v11H.5z" fill="#fff" stroke="#6994b5"/><path d="M2 4h10v7H2z" fill="#68b6dd"/><path d="M2 11l4-4 6 2v2z" fill="#234e70"/></svg></button>
      </div>
      <footer class="statusbar compact d-flex align-items-center flex-shrink-0">
        <span class="flex-grow-1 ps-1">14 items (Disk free space: 39.6 GB)</span>
        <div class="total d-flex align-items-center ps-1">12.2 KB</div>
        <div class="place d-flex align-items-center ps-1"><svg class="i16 me-1 ms-1"><use href="#pcs"/></svg>Computer
          <svg class="ms-auto align-self-end" width="12" height="12" viewBox="0 0 12 12"><path d="M8 2h2v2H8zM4 6h2v2H4zM8 6h2v2H8zM0 10h2v2H0zM4 10h2v2H4zM8 10h2v2H8z" fill="#bbb"/></svg>
        </div>
      </footer>
    </section>
  </main>

  <footer class="taskbar d-flex align-items-center flex-shrink-0" aria-label="Taskbar">
    <button class="flat ms-2" aria-label="Start"><svg class="i32" viewBox="0 0 32 32"><path d="M3 6l11-1.500V14H3zM15 4.400L29 2.500V14H15zM3 15h11v9.500L3 23zM15 15h14v11.500l-14-2z" fill="#fff"/></svg></button>
    <button class="flat ms-4" aria-label="r3dfox"><svg class="i32"><use href="#fox"/></svg></button>
    <button class="flat ms-4 me-3 ps-2" aria-label="Supermium"><svg class="i32"><use href="#sup"/></svg></button>
    <button class="flat task current" aria-label="File Explorer"><svg class="i32"><use href="#lib"/></svg></button>
    <button class="flat task" aria-label="Minecraft"><svg class="i32"><use href="#mc"/></svg></button>
    <button class="flat task" aria-label="Internet Explorer"><svg class="i32"><use href="#ie"/></svg></button>
    <button class="flat ms-auto me-2" aria-label="Show hidden icons"><svg width="12" height="12" viewBox="0 0 12 12"><path d="M2 8h8L6 4z" fill="#fff"/></svg></button>
    <button class="flat ms-1" aria-label="Network"><svg class="i16" viewBox="0 0 18 18"><path d="M5.500 4.500h11v8h-11z" fill="none" stroke="#fff" stroke-width="1.500"/><path d="M8 16h7M11.500 13v3M3 7v8h4" stroke="#fff" stroke-width="1.500" fill="none"/><path d="M1 2h4v5H1z" fill="#b2432b" stroke="#fff"/></svg></button>
    <button class="flat ms-2" aria-label="Volume muted"><svg class="i16" viewBox="0 0 18 18"><path d="M2 6h3l5-4v14l-5-4H2z" fill="#fff"/><path d="M10 9l6 6M16 9l-6 6" stroke="#d92a1a" stroke-width="4"/><path d="M10 9l6 6M16 9l-6 6" stroke="#fff" stroke-width="1.800"/></svg></button>
    <button class="flat compact text-center ms-2 me-2 px-1" aria-label="Clock">5:46 PM<br>10/30/2025</button>
  </footer>
</div>
<script src="https://cdn.jsdelivr.net/npm/bootstrap@5.3.0/dist/js/bootstrap.bundle.min.js"></script>
</body>
</html>
